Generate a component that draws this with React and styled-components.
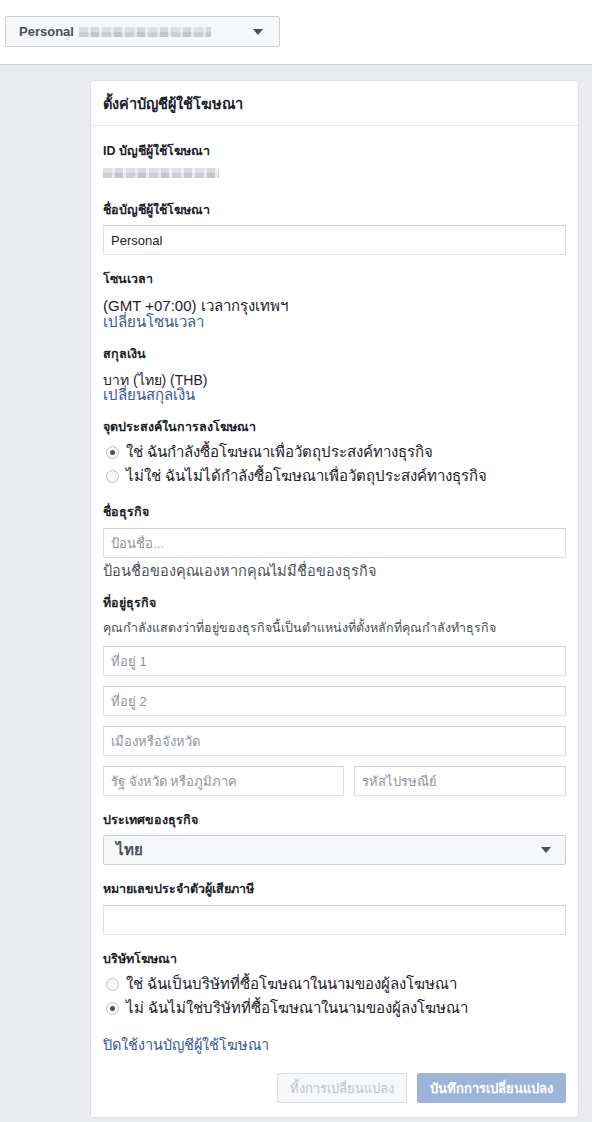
import React, { useState } from "react";
import styled, { createGlobalStyle } from "styled-components";

const GlobalStyle = createGlobalStyle`
  body {
    margin: 0;
    background: #ffffff;
    font-family: "Liberation Sans", "Noto Sans", "DejaVu Sans", sans-serif;
    color: #1d2129;
  }
  * {
    box-sizing: border-box;
  }
`;

export default function App() {
  const [purpose, setPurpose] = useState("business");
  const [agency, setAgency] = useState("no");

  return (
    <>
      <GlobalStyle />
      <TopBar>
        <AccountPicker>
          <span className="picker_name">Personal</span>
          <Blur width={132} height={10} />
          <Caret />
        </AccountPicker>
      </TopBar>

      <Page>
        <Card>
          <CardHeader>ตั้งค่าบัญชีผู้ใช้โฆษณา</CardHeader>
          <CardBody>
            <Section gap={23}>
              <Label space={8}>ID บัญชีผู้ใช้โฆษณา</Label>
              <Blur width={116} height={10} />
            </Section>

            <Section>
              <Label>ชื่อบัญชีผู้ใช้โฆษณา</Label>
              <Input defaultValue="Personal" />
            </Section>

            <Section>
              <Label>โซนเวลา</Label>
              <Value>(GMT +07:00) เวลากรุงเทพฯ</Value>
              <Link>เปลี่ยนโซนเวลา</Link>
            </Section>

            <Section>
              <Label>สกุลเงิน</Label>
              <Value small>บาท (ไทย) (THB)</Value>
              <Link>เปลี่ยนสกุลเงิน</Link>
            </Section>

            <Section>
              <Label space={4}>จุดประสงค์ในการลงโฆษณา</Label>
              <RadioRow onClick={() => setPurpose("business")}>
                <Radio checked={purpose === "business"} />
                ใช่ ฉันกำลังซื้อโฆษณาเพื่อวัตถุประสงค์ทางธุรกิจ
              </RadioRow>
              <RadioRow onClick={() => setPurpose("personal")}>
                <Radio checked={purpose === "personal"} />
                ไม่ใช่ ฉันไม่ได้กำลังซื้อโฆษณาเพื่อวัตถุประสงค์ทางธุรกิจ
              </RadioRow>
            </Section>

            <Section>
              <Label space={7}>ชื่อธุรกิจ</Label>
              <Input placeholder="ป้อนชื่อ..." />
              <Helper>ป้อนชื่อของคุณเองหากคุณไม่มีชื่อของธุรกิจ</Helper>
            </Section>

            <Section>
              <Label space={8}>ที่อยู่ธุรกิจ</Label>
              <SubText>
                คุณกำลังแสดงว่าที่อยู่ของธุรกิจนี้เป็นตำแหน่งที่ตั้งหลักที่คุณกำลังทำธุรกิจ
              </SubText>
              <AddressGrid>
                <Input placeholder="ที่อยู่ 1" />
                <Input placeholder="ที่อยู่ 2" />
                <Input placeholder="เมืองหรือจังหวัด" />
                <SplitRow>
                  <Input placeholder="รัฐ จังหวัด หรือภูมิภาค" />
                  <Input placeholder="รหัสไปรษณีย์" />
                </SplitRow>
              </AddressGrid>
            </Section>

            <Section>
              <Label>ประเทศของธุรกิจ</Label>
              <Select>
                <span>ไทย</span>
                <Caret />
              </Select>
            </Section>

            <Section>
              <Label space={7}>หมายเลขประจำตัวผู้เสียภาษี</Label>
              <Input />
            </Section>

            <Section>
              <Label space={4}>บริษัทโฆษณา</Label>
              <RadioRow onClick={() => setAgency("yes")}>
                <Radio checked={agency === "yes"} />
                ใช่ ฉันเป็นบริษัทที่ซื้อโฆษณาในนามของผู้ลงโฆษณา
              </RadioRow>
              <RadioRow onClick={() => setAgency("no")}>
                <Radio checked={agency === "no"} />
                ไม่ ฉันไม่ใช่บริษัทที่ซื้อโฆษณาในนามของผู้ลงโฆษณา
              </RadioRow>
            </Section>

            <DisableLink>ปิดใช้งานบัญชีผู้ใช้โฆษณา</DisableLink>

            <Footer>
              <Button disabled>ทิ้งการเปลี่ยนแปลง</Button>
              <Button primary disabled>
                บันทึกการเปลี่ยนแปลง
              </Button>
            </Footer>
          </CardBody>
        </Card>
      </Page>
    </>
  );
}

const TopBar = styled.div`
  height: 65px;
  background: #ffffff;
  border-bottom: 1px solid #cfd1d5;
  padding: 16px 0 0 5px;
`;

const AccountPicker = styled.div`
  width: 275px;
  height: 31px;
  display: flex;
  align-items: center;
  padding: 0 16px 0 13px;
  background: #f6f7f9;
  border: 1px solid #ccd0d5;
  border-radius: 2px;

  .picker_name {
    font-size: 13px;
    font-weight: 700;
    color: #4b4f56;
    margin-right: 5px;
  }

  & > span:last-child {
    margin-left: auto;
  }
`;

const Blur = styled.div`
  width: ${(p) => p.width}px;
  height: ${(p) => p.height}px;
  background: repeating-linear-gradient(
      90deg,
      #c4c7cc 0 9px,
      #dfe1e4 9px 12px,
      #b9bdc3 12px 20px,
      #e4e6e9 20px 23px
    ),
    #d3d6da;
  opacity: 0.85;
  box-shadow: inset 0 5px 0 rgba(255, 255, 255, 0.35);
`;

const Caret = styled.span`
  width: 0;
  height: 0;
  border-left: 5px solid transparent;
  border-right: 5px solid transparent;
  border-top: 6px solid #4b4f56;
`;

const Page = styled.div`
  background: #e9ebee;
  min-height: 1057px;
  padding: 15px 13px 4px 90px;
`;

const Card = styled.div`
  background: #ffffff;
  border: 1px solid #dddfe2;
  border-radius: 3px;
`;

const CardHeader = styled.div`
  height: 45px;
  display: flex;
  align-items: center;
  padding: 0 12px;
  border-bottom: 1px solid #e5e5e5;
  font-size: 14.5px;
  font-weight: 700;
  color: #1d2129;
`;

const CardBody = styled.div`
  padding: 16px 12px 14px 12px;
  display: flex;
  flex-direction: column;
`;

const Section = styled.div`
  display: flex;
  flex-direction: column;
  margin-bottom: ${(p) => p.gap ?? 15}px;
`;

const Label = styled.div`
  font-size: 12.5px;
  font-weight: 700;
  line-height: 18px;
  color: #1d2129;
  margin-bottom: ${(p) => p.space ?? 6}px;
`;

const Value = styled.div`
  font-size: ${(p) => (p.small ? 14 : 15)}px;
  line-height: ${(p) => (p.small ? 14 : 16)}px;
  color: #1d2129;
  margin-top: 4px;
`;

const Link = styled.a`
  font-size: 15px;
  line-height: 16px;
  color: #365899;
  cursor: pointer;
`;

const RadioRow = styled.label`
  display: flex;
  align-items: center;
  gap: 7px;
  height: 24px;
  font-size: 15px;
  color: #1d2129;
  cursor: pointer;
  padding-left: 3px;
`;

const Radio = styled.span`
  width: 13px;
  height: 13px;
  border-radius: 50%;
  border: 1px solid #bec3c9;
  background: #f6f7f9;
  display: flex;
  align-items: center;
  justify-content: center;
  flex-shrink: 0;

  &::after {
    content: "";
    width: 5px;
    height: 5px;
    border-radius: 50%;
    background: ${(p) => (p.checked ? "#4b4f56" : "transparent")};
  }
`;

const Input = styled.input`
  width: 100%;
  height: 30px;
  padding: 0 7px;
  border: 1px solid #dddfe2;
  border-top-color: #ccd0d5;
  border-radius: 0;
  font-family: "Liberation Sans", "Noto Sans", sans-serif;
  font-size: 13px;
  color: #1d2129;
  outline: none;

  &::placeholder {
    color: #90949c;
  }
`;

const Helper = styled.div`
  font-size: 14.5px;
  line-height: 16px;
  color: #4b4f56;
  margin-top: 5px;
`;

const SubText = styled.div`
  font-size: 12.5px;
  line-height: 16px;
  color: #4b4f56;
  margin-bottom: 10px;
`;

const AddressGrid = styled.div`
  display: flex;
  flex-direction: column;
  gap: 10px;
`;

const SplitRow = styled.div`
  display: grid;
  grid-template-columns: 241px 1fr;
  gap: 10px;
`;

const Select = styled.div`
  height: 30px;
  display: flex;
  align-items: center;
  justify-content: space-between;
  padding: 0 14px 0 12px;
  background: #f6f7f9;
  border: 1px solid #ccd0d5;
  border-radius: 2px;
  font-size: 15px;
  font-weight: 700;
  color: #4b4f56;
`;

const DisableLink = styled.a`
  font-size: 14.5px;
  line-height: 20px;
  color: #365899;
  margin-bottom: 18px;
  cursor: pointer;
`;

const Footer = styled.div`
  display: flex;
  justify-content: flex-end;
  gap: 10px;
`;

const Button = styled.button`
  height: 30px;
  padding: 0 12px;
  border-radius: 2px;
  border: 1px solid ${(p) => (p.primary ? "#9cb4d8" : "#dddfe2")};
  background: ${(p) => (p.primary ? "#9cb4d8" : "#f6f7f9")};
  color: ${(p) => (p.primary ? "#ffffff" : "#bec3c9")};
  font-family: "Liberation Sans", "Noto Sans", sans-serif;
  font-size: 13px;
  font-weight: ${(p) => (p.primary ? 700 : 400)};
  cursor: default;
`;
